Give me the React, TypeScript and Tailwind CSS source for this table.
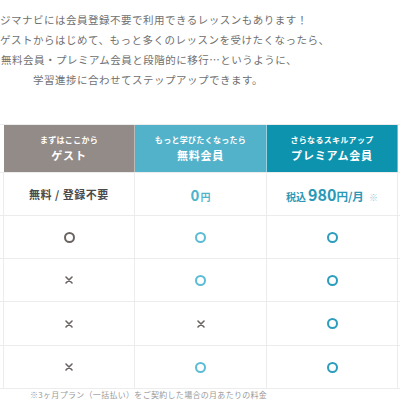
const font = { fontFamily: '"Noto Sans CJK JP", "Noto Sans", sans-serif' };

type Mark = "o" | "x";

const plans = [
  { sub: "まずはここから", title: "ゲスト", head: "bg-[#928b88]", circle: "border-[#6b6461]" },
  { sub: "もっと学びたくなったら", title: "無料会員", head: "bg-[#52b2ca]", circle: "border-[#5cbcd6]" },
  { sub: "さらなるスキルアップ", title: "プレミアム会員", head: "bg-[#0e93ae]", circle: "border-[#2c9dbd]" },
];

const rows: Mark[][] = [
  ["o", "o", "o"],
  ["x", "o", "o"],
  ["x", "x", "o"],
  ["x", "o", "o"],
];

const colW = ["w-[131px]", "w-[132px]", "w-[131px]"];

function Symbol({ mark, circle }: { mark: Mark; circle: string }) {
  if (mark === "o") {
    return <span className={`block w-[11px] h-[11px] rounded-full border-2 ${circle}`} />;
  }
  return (
    <svg width="8" height="8" viewBox="0 0 8 8" className="block">
      <path d="M1 1L7 7M7 1L1 7" stroke="#6a6462" strokeWidth="1.6" strokeLinecap="round" />
    </svg>
  );
}

export default function App() {
  return (
    <div className="w-[400px] h-[400px] overflow-hidden bg-white" style={font}>
      <div className="pt-[10px] text-[10.5px] leading-[20px] tracking-[0.5px] text-[#707070] whitespace-nowrap">
        <p>ジマナビには会員登録不要で利用できるレッスンもあります！</p>
        <p>ゲストからはじめて、もっと多くのレッスンを受けたくなったら、</p>
        <p className="pl-[1px]">無料会員・プレミアム会員と段階的に移行…というように、</p>
        <p className="pl-[33px]">学習進捗に合わせてステップアップできます。</p>
      </div>

      <div className="mt-[34px] border-t border-[#ececec]">
        {/* header */}
        <div className="flex h-[48px] border-b border-[#ececec]">
          <div className="w-[4px]" />
          {plans.map((p, i) => (
            <div
              key={p.title}
              className={`${colW[i]} ${p.head} border-r border-white/40 flex flex-col items-center justify-center text-white font-bold`}
            >
              <span className="text-[8px] leading-[12px] tracking-[0.3px]">{p.sub}</span>
              <span className="text-[11px] leading-[15px] tracking-[0.8px] mt-[2px]">{p.title}</span>
            </div>
          ))}
        </div>

        {/* price row */}
        <div className="flex h-[43px] border-b border-[#ececec]">
          <div className="w-[4px] border-r border-[#ececec]" />
          <div className={`${colW[0]} border-r border-[#ececec] flex items-center justify-center text-[11px] font-bold text-[#4a4a4a] tracking-[0.5px]`}>
            無料 / 登録不要
          </div>
          <div className={`${colW[1]} border-r border-[#ececec] flex items-center justify-center font-bold text-[#4fb3cc]`}>
            <span className="flex items-baseline">
              <span className="text-[15px] leading-none">0</span>
              <span className="text-[10px] leading-none ml-[1px]">円</span>
            </span>
          </div>
          <div className={`${colW[2]} border-r border-[#ececec] flex items-center justify-center font-bold text-[#2a98b6]`}>
            <span className="flex items-baseline">
              <span className="text-[10px] leading-none">税込</span>
              <span className="text-[16px] leading-none ml-[2px]">980</span>
              <span className="text-[11.5px] leading-none">円/月</span>
              <span className="text-[9px] leading-none ml-[5px] text-[#9dcbd6]">※</span>
            </span>
          </div>
        </div>

        {rows.map((r, ri) => (
          <div key={ri} className={`flex ${ri === 2 ? "h-[44px]" : "h-[43px]"} border-b border-[#ececec]`}>
            <div className="w-[4px] border-r border-[#ececec]" />
            {r.map((m, ci) => (
              <div key={ci} className={`${colW[ci]} border-r border-[#ececec] flex items-center justify-center`}>
                <Symbol mark={m} circle={plans[ci].circle} />
              </div>
            ))}
          </div>
        ))}
      </div>

      <p className="pl-[30px] text-[8px] leading-[12px] tracking-[0.3px] text-[#9a9a9a] whitespace-nowrap">
        ※3ヶ月プラン（一括払い）をご契約した場合の月あたりの料金
      </p>
    </div>
  );
}
